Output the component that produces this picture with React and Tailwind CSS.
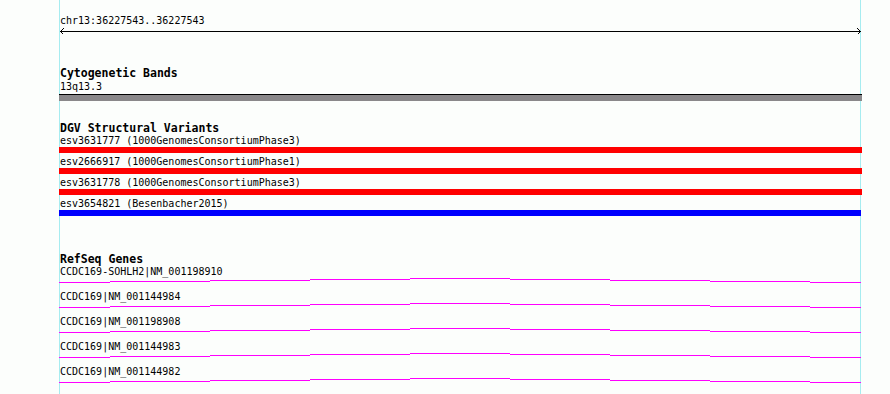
import React from 'react';

const mono = { fontFamily: '"DejaVu Sans Mono", "Liberation Mono", monospace' };

const variants = [
  { id: 'esv3631777', study: '1000GenomesConsortiumPhase3', color: 'bg-[#ff0000]', w: 'w-[803px]' },
  { id: 'esv2666917', study: '1000GenomesConsortiumPhase1', color: 'bg-[#ff0000]', w: 'w-[803px]' },
  { id: 'esv3631778', study: '1000GenomesConsortiumPhase3', color: 'bg-[#ff0000]', w: 'w-[803px]' },
  { id: 'esv3654821', study: 'Besenbacher2015', color: 'bg-[#0000ff]', w: 'w-[802px]' },
];

const genes = [
  'CCDC169-SOHLH2|NM_001198910',
  'CCDC169|NM_001144984',
  'CCDC169|NM_001198908',
  'CCDC169|NM_001144983',
  'CCDC169|NM_001144982',
];

// x ranges (relative to track origin at x=59) and row offsets of the gene line
const segments = [
  [0, 51, 4], [51, 151, 3], [151, 251, 2], [251, 351, 1], [351, 451, 0],
  [451, 551, 1], [551, 651, 2], [651, 751, 3], [751, 802, 4],
];

const GeneLine = () => (
  <svg width="803" height="13" shapeRendering="crispEdges" className="block">
    {segments.map(([x1, x2, y]) => (
      <rect key={x1} x={x1} y={y} width={x2 - x1} height="1" fill="#ff00ff" />
    ))}
  </svg>
);

const Ruler = () => (
  <svg width="803" height="7" shapeRendering="crispEdges" className="block">
    <rect x="1" y="3" width="801" height="1" fill="#000" />
    <polyline points="4.5,0.5 1.5,3.5 4.5,6.5" fill="none" stroke="#000" strokeWidth="1" />
    <polyline points="798.5,0.5 801.5,3.5 798.5,6.5" fill="none" stroke="#000" strokeWidth="1" />
  </svg>
);

const Heading = ({ children, className = '' }) => (
  <div className={`pl-[1px] text-[11.5px] leading-[13px] h-[13px] font-bold text-black whitespace-pre ${className}`}>
    {children}
  </div>
);

const Label = ({ children, className = '' }) => (
  <div className={`pl-[1px] text-[10px] leading-[12px] h-[12px] text-black whitespace-pre ${className}`}>
    {children}
  </div>
);

export default function App() {
  return (
    <div className="relative w-[890px] h-[394px] overflow-hidden bg-[#fcfefc]" style={mono}>
      {/* view boundary guides */}
      <div className="absolute left-[59px] top-0 w-[1px] h-full bg-[#a6ecf0]" />
      <div className="absolute left-[860px] top-0 w-[1px] h-full bg-[#a6ecf0]" />

      <div className="relative ml-[59px] w-[803px] flex flex-col">
        <Label className="mt-[15px]">chr13:36227543..36227543</Label>
        <div className="mt-[1px]">
          <Ruler />
        </div>

        <Heading className="mt-[32px]">Cytogenetic Bands</Heading>
        <Label className="mt-[1px]">13q13.3</Label>
        <div className="mt-[1px] h-[7px] border-t border-black bg-[#8a888a]" />

        <Heading className="mt-[21px]">DGV Structural Variants</Heading>
        {variants.map((v, i) => (
          <div key={v.id} className={i > 0 ? 'mt-[3px]' : ''}>
            <Label>{`${v.id} (${v.study})`}</Label>
            <div className={`h-[6px] ${v.w} ${v.color}`} />
          </div>
        ))}

        <Heading className="mt-[37px]">RefSeq Genes</Heading>
        {genes.map((g) => (
          <div key={g}>
            <Label>{g}</Label>
            <GeneLine />
          </div>
        ))}
      </div>
    </div>
  );
}
